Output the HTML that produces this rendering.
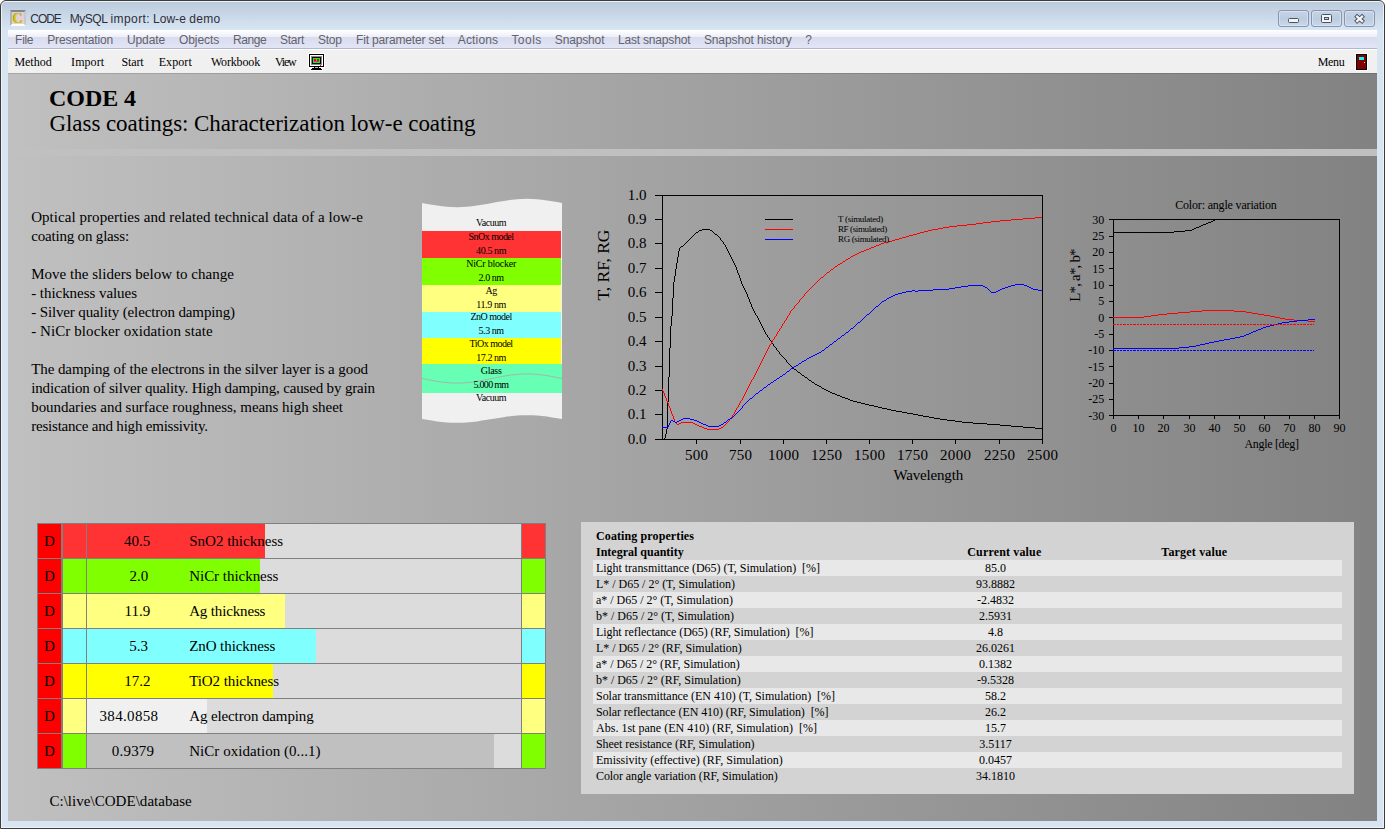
<!DOCTYPE html>
<html lang="en"><head><meta charset="utf-8"><title>CODE MySQL import: Low-e demo</title>
<style>
*{box-sizing:border-box;margin:0;padding:0}
html,body{width:1385px;height:829px;overflow:hidden;background:#fff}
body{font-family:"Liberation Serif",serif;color:#000;position:relative}
.t{position:absolute;white-space:pre}
.b{position:absolute}
#frame{position:absolute;left:0;top:0;width:1385px;height:829px;background:#d7e4f2;border:1px solid #3c3c3c;border-radius:6px 6px 0 0;overflow:hidden;box-shadow:inset 0 0 0 1px rgba(255,255,255,.55)}
#title{position:absolute;left:2px;top:2px;width:1381px;height:28px;border-radius:4px 4px 0 0;background:linear-gradient(#bbccdd 0,#d8e5f3 100%)}
#menubar{position:absolute;left:8px;top:30px;width:1369px;height:19px;background:linear-gradient(#ffffff 0,#fbfbfe 2px,#eceef7 7px,#d9dcef 7.2px,#e2e5f4 18px);border-bottom:1px solid #b3b8cf}
#tool{position:absolute;left:8px;top:49px;width:1369px;height:24px;background:#f0f0f0;border-top:1px solid #fff}
#content{position:absolute;left:8px;top:73px;width:1369px;height:748px;background:linear-gradient(90deg,#c0c0c0 0,#828282 100%);border-top:1px solid rgba(0,0,0,.13)}
</style></head>
<body>
<div id="frame"></div><div id="title"></div><div id="menubar"></div><div id="tool"></div><div id="content"></div>
<div class="b" style="left:8px;top:149px;width:1369px;height:7px;background:#c0c0c0"></div>
<div class="b" style="left:10px;top:10px;width:16px;height:16px;border-style:solid;border-width:2px;border-color:#858585 #c8c8c8 #fdfdfd #b2b2b2;background:linear-gradient(#d9cbe8,#ecd3c4)"></div><span class="t" style='left:12.90px;top:10.17px;font:bold 14px/18px "Liberation Serif",serif;color:#cfcf16;text-shadow:-0.6px 0 0 #8f8f10;'>C</span><span class="t" style='left:30.30px;top:11.64px;font:12px/15px "Liberation Sans",sans-serif;letter-spacing:-1.078px;color:#2e2e3a;'>CODE</span><span class="t" style='left:69.70px;top:11.64px;font:12px/15px "Liberation Sans",sans-serif;letter-spacing:-0.470px;color:#2e2e3a;'>MySQL</span><span class="t" style='left:110.40px;top:11.64px;font:12px/15px "Liberation Sans",sans-serif;letter-spacing:0.433px;color:#2e2e3a;'>import:</span><span class="t" style='left:152.90px;top:11.64px;font:12px/15px "Liberation Sans",sans-serif;letter-spacing:0.069px;color:#2e2e3a;'>Low-e</span><span class="t" style='left:189.30px;top:11.64px;font:12px/15px "Liberation Sans",sans-serif;letter-spacing:0.248px;color:#2e2e3a;'>demo</span><div class="b" style="left:1278px;top:10px;width:31px;height:17px;border:1px solid #8693b1;border-radius:3px;background:linear-gradient(#c5d4e5,#bccce0 50%,#c8d7e8);box-shadow:inset 0 0 0 1px rgba(255,255,255,.35)"></div><div class="b" style="left:1311px;top:10px;width:31px;height:17px;border:1px solid #8693b1;border-radius:3px;background:linear-gradient(#c5d4e5,#bccce0 50%,#c8d7e8);box-shadow:inset 0 0 0 1px rgba(255,255,255,.35)"></div><div class="b" style="left:1344px;top:10px;width:31px;height:17px;border:1px solid #8693b1;border-radius:3px;background:linear-gradient(#c5d4e5,#bccce0 50%,#c8d7e8);box-shadow:inset 0 0 0 1px rgba(255,255,255,.35)"></div><div class="b" style="left:1288px;top:18px;width:11px;height:5px;border:1px solid #4b5263;border-radius:1.5px;background:#f4f4f4"></div><div class="b" style="left:1321px;top:14px;width:11px;height:9px;border:1px solid #4b5263;border-radius:1.5px;background:#f4f4f4"></div><div class="b" style="left:1324px;top:17px;width:5px;height:3px;border:1px solid #4b5263;background:#c1d0e3"></div><svg class="b" style="left:1352px;top:12px" width="16" height="14" viewBox="1352 12 16 14"><g stroke-linecap="butt" fill="none"><path d="M1355.6 15.2l8 7.2M1363.6 15.2l-8 7.2" stroke="#4b5263" stroke-width="4.2"/><path d="M1356.3 15.9l6.6 5.9M1362.9 15.9l-6.6 5.9" stroke="#f4f4f4" stroke-width="2.3"/></g></svg><span class="t" style='left:15.10px;top:33.44px;font:12px/15px "Liberation Sans",sans-serif;letter-spacing:-0.298px;color:#63636b;'>File</span><span class="t" style='left:47.20px;top:33.44px;font:12px/15px "Liberation Sans",sans-serif;letter-spacing:-0.121px;color:#63636b;'>Presentation</span><span class="t" style='left:126.90px;top:33.44px;font:12px/15px "Liberation Sans",sans-serif;letter-spacing:-0.091px;color:#63636b;'>Update</span><span class="t" style='left:178.90px;top:33.44px;font:12px/15px "Liberation Sans",sans-serif;letter-spacing:-0.060px;color:#63636b;'>Objects</span><span class="t" style='left:232.90px;top:33.44px;font:12px/15px "Liberation Sans",sans-serif;letter-spacing:-0.417px;color:#63636b;'>Range</span><span class="t" style='left:280.10px;top:33.44px;font:12px/15px "Liberation Sans",sans-serif;letter-spacing:-0.299px;color:#63636b;'>Start</span><span class="t" style='left:318.00px;top:33.44px;font:12px/15px "Liberation Sans",sans-serif;letter-spacing:-0.254px;color:#63636b;'>Stop</span><span class="t" style='left:356.00px;top:33.44px;font:12px/15px "Liberation Sans",sans-serif;letter-spacing:-0.152px;color:#63636b;'>Fit parameter set</span><span class="t" style='left:457.80px;top:33.44px;font:12px/15px "Liberation Sans",sans-serif;letter-spacing:0.160px;color:#63636b;'>Actions</span><span class="t" style='left:511.40px;top:33.44px;font:12px/15px "Liberation Sans",sans-serif;letter-spacing:0.463px;color:#63636b;'>Tools</span><span class="t" style='left:554.80px;top:33.44px;font:12px/15px "Liberation Sans",sans-serif;letter-spacing:-0.149px;color:#63636b;'>Snapshot</span><span class="t" style='left:617.90px;top:33.44px;font:12px/15px "Liberation Sans",sans-serif;letter-spacing:-0.177px;color:#63636b;'>Last snapshot</span><span class="t" style='left:703.90px;top:33.44px;font:12px/15px "Liberation Sans",sans-serif;letter-spacing:-0.103px;color:#63636b;'>Snapshot history</span><span class="t" style='left:805.20px;top:33.44px;font:12px/15px "Liberation Sans",sans-serif;color:#63636b;'>?</span>
<span class="t" style='left:14.40px;top:54.75px;font:12px/15px "Liberation Serif",serif;letter-spacing:-0.008px;'>Method</span><span class="t" style='left:71.10px;top:54.75px;font:12px/15px "Liberation Serif",serif;letter-spacing:0.060px;'>Import</span><span class="t" style='left:121.60px;top:54.75px;font:12px/15px "Liberation Serif",serif;letter-spacing:-0.149px;'>Start</span><span class="t" style='left:158.70px;top:54.75px;font:12px/15px "Liberation Serif",serif;letter-spacing:0.078px;'>Export</span><span class="t" style='left:210.90px;top:54.75px;font:12px/15px "Liberation Serif",serif;letter-spacing:-0.157px;'>Workbook</span><span class="t" style='left:275.00px;top:54.75px;font:12px/15px "Liberation Serif",serif;letter-spacing:-1.195px;'>View</span><span class="t" style='left:1317.70px;top:54.75px;font:12px/15px "Liberation Serif",serif;letter-spacing:-0.343px;'>Menu</span><svg class="b" style="left:307px;top:52px" width="20" height="20" viewBox="307 52 20 20" shape-rendering="crispEdges"><rect x="308" y="53" width="17" height="15" fill="#fff"/><rect x="310" y="67" width="13" height="4" fill="#fff"/><rect x="309" y="54" width="15" height="13" fill="#000"/><rect x="310" y="55" width="13" height="11" fill="#fff"/><rect x="311" y="56" width="11" height="9" fill="#8a8a8a"/><rect x="312" y="57" width="9" height="7" fill="#100010"/><rect x="313" y="58" width="7" height="5" fill="#00ff00"/><rect x="314" y="59" width="2" height="2" fill="#ff0000"/><rect x="317" y="59" width="2" height="2" fill="#ff0000"/><rect x="314" y="61" width="5" height="1" fill="#ff00ff"/><rect x="320" y="65" width="1" height="1" fill="#ff0000"/><rect x="314" y="67" width="5" height="2" fill="#000"/><rect x="315" y="67" width="3" height="1" fill="#c0c0c0"/><rect x="312" y="68" width="9" height="1" fill="#000"/><rect x="311" y="69" width="11" height="1" fill="#000"/></svg><svg class="b" style="left:1355px;top:53px" width="13" height="18" viewBox="1355 53 13 18" shape-rendering="crispEdges"><rect x="1355" y="53" width="13" height="18" fill="#fff"/><rect x="1356" y="54" width="11" height="16" fill="#000"/><rect x="1357" y="55" width="9" height="14" fill="#800000"/><rect x="1359" y="57" width="5" height="3" fill="#00ffff"/><rect x="1364" y="62" width="1" height="1" fill="#ffff00"/></svg>
<span class="t" style='left:49.00px;top:83.00px;font:bold 24px/30px "Liberation Serif",serif;letter-spacing:-0.062px;'>CODE 4</span><span class="t" style='left:49.50px;top:109.04px;font:23px/29px "Liberation Serif",serif;letter-spacing:-0.070px;'>Glass coatings: Characterization low-e coating</span>
<span class="t" style='left:31.20px;top:207.84px;font:15px/19px "Liberation Serif",serif;letter-spacing:0.050px;'>Optical properties and related technical data of a low-e</span><span class="t" style='left:31.20px;top:226.84px;font:15px/19px "Liberation Serif",serif;letter-spacing:-0.184px;'>coating on glass:</span><span class="t" style='left:31.20px;top:264.84px;font:15px/19px "Liberation Serif",serif;letter-spacing:0.024px;'>Move the sliders below to change</span><span class="t" style='left:31.20px;top:283.84px;font:15px/19px "Liberation Serif",serif;letter-spacing:-0.048px;'>- thickness values</span><span class="t" style='left:31.20px;top:302.84px;font:15px/19px "Liberation Serif",serif;letter-spacing:-0.130px;'>- Silver quality (electron damping)</span><span class="t" style='left:31.20px;top:321.84px;font:15px/19px "Liberation Serif",serif;letter-spacing:0.081px;'>- NiCr blocker oxidation state</span><span class="t" style='left:31.20px;top:359.84px;font:15px/19px "Liberation Serif",serif;letter-spacing:-0.090px;'>The damping of the electrons in the silver layer is a good</span><span class="t" style='left:31.20px;top:378.84px;font:15px/19px "Liberation Serif",serif;letter-spacing:-0.159px;'>indication of silver quality. High damping, caused by grain</span><span class="t" style='left:31.20px;top:397.84px;font:15px/19px "Liberation Serif",serif;letter-spacing:-0.038px;'>boundaries and surface roughness, means high sheet</span><span class="t" style='left:31.20px;top:416.84px;font:15px/19px "Liberation Serif",serif;letter-spacing:-0.209px;'>resistance and high emissivity.</span>
<svg class="b" style="left:410px;top:190px" width="170" height="245" viewBox="410 190 170 245"><polygon points="422.0,203.0 427.0,203.9 432.0,204.8 437.0,205.6 442.0,206.3 447.0,206.8 452.0,207.1 457.0,207.2 462.0,207.1 467.0,206.8 472.0,206.3 477.0,205.6 482.0,204.8 487.0,203.9 492.0,203.0 497.0,202.1 502.0,201.2 507.0,200.4 512.0,199.7 517.0,199.2 522.0,198.9 527.0,198.8 532.0,198.9 537.0,199.2 542.0,199.7 547.0,200.4 552.0,201.2 557.0,202.1 562.0,203.0 562.0,419.0 557.0,418.2 552.0,417.4 547.0,416.6 542.0,416.0 537.0,415.6 532.0,415.3 527.0,415.2 522.0,415.3 517.0,415.6 512.0,416.0 507.0,416.6 502.0,417.4 497.0,418.2 492.0,419.0 487.0,419.8 482.0,420.6 477.0,421.4 472.0,422.0 467.0,422.4 462.0,422.7 457.0,422.8 452.0,422.7 447.0,422.4 442.0,422.0 437.0,421.4 432.0,420.6 427.0,419.8 422.0,419.0" fill="#f0f0f0"/><rect x="422" y="231" width="139" height="27" fill="#ff3333" shape-rendering="crispEdges"/><rect x="422" y="258" width="139" height="27" fill="#80ff00" shape-rendering="crispEdges"/><rect x="422" y="285" width="139" height="27" fill="#ffff80" shape-rendering="crispEdges"/><rect x="422" y="312" width="139" height="26" fill="#80ffff" shape-rendering="crispEdges"/><rect x="422" y="338" width="139" height="26" fill="#ffff00" shape-rendering="crispEdges"/><rect x="422" y="364" width="140" height="29" fill="#66ffb3" shape-rendering="crispEdges"/><polyline points="422.0,378.5 427.0,379.5 432.0,380.5 437.0,381.4 442.0,382.1 447.0,382.6 452.0,383.0 457.0,383.1 462.0,383.0 467.0,382.6 472.0,382.1 477.0,381.4 482.0,380.5 487.0,379.5 492.0,378.5 497.0,377.5 502.0,376.5 507.0,375.6 512.0,374.9 517.0,374.4 522.0,374.0 527.0,373.9 532.0,374.0 537.0,374.4 542.0,374.9 547.0,375.6 552.0,376.5 557.0,377.5 562.0,378.5" fill="none" stroke="#a3b8aa" stroke-width="1"/></svg><span class="t" style='left:476.08px;top:215.82px;font:10px/13px "Liberation Serif",serif;letter-spacing:-0.469px;'>Vacuum</span><span class="t" style='left:468.57px;top:229.82px;font:10px/13px "Liberation Serif",serif;letter-spacing:-0.535px;'>SnOx model</span><span class="t" style='left:476.10px;top:244.22px;font:10px/13px "Liberation Serif",serif;letter-spacing:-0.397px;'>40.5 nm</span><span class="t" style='left:466.34px;top:256.82px;font:10px/13px "Liberation Serif",serif;letter-spacing:-0.235px;'>NiCr blocker</span><span class="t" style='left:478.54px;top:270.93px;font:10px/13px "Liberation Serif",serif;letter-spacing:-0.451px;'>2.0 nm</span><span class="t" style='left:485.43px;top:284.02px;font:10px/13px "Liberation Serif",serif;letter-spacing:-0.490px;'>Ag</span><span class="t" style='left:476.25px;top:297.82px;font:10px/13px "Liberation Serif",serif;letter-spacing:-0.388px;'>11.9 nm</span><span class="t" style='left:470.38px;top:309.82px;font:10px/13px "Liberation Serif",serif;letter-spacing:-0.497px;'>ZnO model</span><span class="t" style='left:478.54px;top:323.82px;font:10px/13px "Liberation Serif",serif;letter-spacing:-0.451px;'>5.3 nm</span><span class="t" style='left:469.47px;top:336.72px;font:10px/13px "Liberation Serif",serif;letter-spacing:-0.512px;'>TiOx model</span><span class="t" style='left:476.24px;top:350.82px;font:10px/13px "Liberation Serif",serif;letter-spacing:-0.443px;'>17.2 nm</span><span class="t" style='left:480.69px;top:364.02px;font:10px/13px "Liberation Serif",serif;letter-spacing:-0.252px;'>Glass</span><span class="t" style='left:473.47px;top:377.72px;font:10px/13px "Liberation Serif",serif;letter-spacing:-0.702px;'>5.000 mm</span><span class="t" style='left:476.08px;top:391.02px;font:10px/13px "Liberation Serif",serif;letter-spacing:-0.469px;'>Vacuum</span>
<svg class="b" style="left:590px;top:180px" width="480" height="310" viewBox="590 180 480 310" shape-rendering="crispEdges"><path d="M655 195.5H1042.5V439.5H655M662.5 195.5V439.5" fill="none" stroke="#000" stroke-width="1"/><path d="M655 219.5H662M655 243.5H662M655 268.5H662M655 292.5H662M655 317.5H662M655 341.5H662M655 366.5H662M655 390.5H662M655 414.5H662" fill="none" stroke="#000" stroke-width="1"/><path d="M696.5 439V444M740.5 439V444M783.5 439V444M826.5 439V444M869.5 439V444M912.5 439V444M955.5 439V444M999.5 439V444M1042.5 439V444" fill="none" stroke="#000" stroke-width="1"/><path d="M702 229h8v1h-8zM699 230h3v1h-3zM710 230h2v1h-2zM698 231h1v1h-1zM712 231h1v1h-1zM696 232h2v1h-2zM713 232h1v1h-1zM695 233h1v1h-1zM714 233h1v1h-1zM694 234h1v1h-1zM715 234h2v1h-2zM693 235h1v1h-1zM717 235h1v1h-1zM692 236h1v1h-1zM718 236h1v1h-1zM691 237h1v1h-1zM719 237h1v1h-1zM690 238h1v1h-1zM720 238h1v2h-1zM689 239h1v1h-1zM688 240h1v1h-1zM721 240h1v1h-1zM687 241h1v1h-1zM722 241h1v1h-1zM686 242h1v1h-1zM723 242h1v2h-1zM685 243h1v1h-1zM684 244h1v1h-1zM724 244h1v1h-1zM683 245h1v1h-1zM725 245h1v2h-1zM681 246h2v1h-2zM680 247h1v1h-1zM726 247h1v2h-1zM679 248h1v3h-1zM727 249h1v2h-1zM678 251h1v6h-1zM728 251h1v2h-1zM729 253h1v2h-1zM730 255h1v2h-1zM677 257h1v6h-1zM731 257h1v2h-1zM732 259h1v2h-1zM733 261h1v2h-1zM676 263h1v6h-1zM734 263h1v2h-1zM735 265h1v2h-1zM736 267h1v3h-1zM675 269h1v7h-1zM737 270h1v3h-1zM738 273h1v2h-1zM739 275h1v3h-1zM674 276h1v6h-1zM740 278h1v3h-1zM741 281h1v3h-1zM673 282h1v16h-1zM742 284h1v2h-1zM743 286h1v2h-1zM744 288h1v2h-1zM745 290h1v2h-1zM746 292h1v2h-1zM747 294h1v3h-1zM748 297h1v2h-1zM672 298h1v18h-1zM749 299h1v3h-1zM750 302h1v2h-1zM751 304h1v3h-1zM752 307h1v2h-1zM753 309h1v2h-1zM754 311h1v2h-1zM755 313h1v2h-1zM756 315h1v1h-1zM671 316h1v10h-1zM757 316h1v2h-1zM758 318h1v2h-1zM759 320h1v2h-1zM760 322h1v2h-1zM761 324h1v2h-1zM670 326h1v22h-1zM762 326h1v2h-1zM763 328h1v2h-1zM764 330h1v2h-1zM765 332h1v2h-1zM766 334h1v1h-1zM767 335h1v2h-1zM768 337h1v1h-1zM769 338h1v2h-1zM770 340h1v1h-1zM771 341h1v2h-1zM772 343h1v1h-1zM773 344h1v2h-1zM774 346h1v1h-1zM775 347h1v1h-1zM669 348h1v29h-1zM776 348h1v2h-1zM777 350h1v1h-1zM778 351h1v1h-1zM779 352h1v2h-1zM780 354h1v1h-1zM781 355h1v1h-1zM782 356h1v1h-1zM783 357h1v1h-1zM784 358h1v1h-1zM785 359h1v1h-1zM786 360h1v2h-1zM787 362h1v1h-1zM788 363h1v1h-1zM789 364h1v1h-1zM790 365h1v1h-1zM791 366h1v1h-1zM792 367h1v1h-1zM793 368h1v1h-1zM794 369h2v1h-2zM796 370h1v1h-1zM797 371h1v1h-1zM798 372h2v1h-2zM800 373h1v1h-1zM801 374h1v1h-1zM802 375h2v1h-2zM804 376h1v1h-1zM668 377h1v25h-1zM805 377h2v1h-2zM807 378h1v1h-1zM808 379h1v1h-1zM809 380h2v1h-2zM811 381h1v1h-1zM812 382h2v1h-2zM814 383h1v1h-1zM815 384h2v1h-2zM817 385h2v1h-2zM819 386h2v1h-2zM821 387h1v1h-1zM822 388h2v1h-2zM824 389h2v1h-2zM826 390h2v1h-2zM828 391h2v1h-2zM830 392h2v1h-2zM832 393h3v1h-3zM835 394h2v1h-2zM837 395h3v1h-3zM840 396h2v1h-2zM842 397h3v1h-3zM845 398h3v1h-3zM848 399h2v1h-2zM850 400h3v1h-3zM853 401h4v1h-4zM667 402h1v27h-1zM857 402h4v1h-4zM861 403h4v1h-4zM865 404h4v1h-4zM869 405h5v1h-5zM874 406h4v1h-4zM878 407h4v1h-4zM882 408h5v1h-5zM887 409h4v1h-4zM891 410h5v1h-5zM896 411h6v1h-6zM902 412h5v1h-5zM907 413h6v1h-6zM913 414h5v1h-5zM918 415h5v1h-5zM923 416h6v1h-6zM929 417h5v1h-5zM934 418h6v1h-6zM940 419h7v1h-7zM947 420h8v1h-8zM955 421h7v1h-7zM962 422h11v1h-11zM973 423h14v1h-14zM987 424h13v1h-13zM1000 425h11v1h-11zM1011 426h12v1h-12zM1023 427h12v1h-12zM1035 428h7v1h-7zM666 429h1v5h-1zM665 434h1v4h-1zM664 438h1v1h-1z" fill="#000"/><path d="M1035 217h7v1h-7zM1023 218h12v1h-12zM1011 219h12v1h-12zM1000 220h11v1h-11zM991 221h9v1h-9zM983 222h8v1h-8zM976 223h7v1h-7zM967 224h9v1h-9zM957 225h10v1h-10zM949 226h8v1h-8zM943 227h6v1h-6zM938 228h5v1h-5zM932 229h6v1h-6zM928 230h4v1h-4zM924 231h4v1h-4zM920 232h4v1h-4zM917 233h3v1h-3zM913 234h4v1h-4zM909 235h4v1h-4zM906 236h3v1h-3zM902 237h4v1h-4zM899 238h3v1h-3zM895 239h4v1h-4zM892 240h3v1h-3zM888 241h4v1h-4zM884 242h4v1h-4zM881 243h3v1h-3zM879 244h2v1h-2zM876 245h3v1h-3zM874 246h2v1h-2zM871 247h3v1h-3zM869 248h2v1h-2zM866 249h3v1h-3zM864 250h2v1h-2zM861 251h3v1h-3zM859 252h2v1h-2zM857 253h2v1h-2zM855 254h2v1h-2zM853 255h2v1h-2zM851 256h2v1h-2zM850 257h1v1h-1zM848 258h2v1h-2zM846 259h2v1h-2zM845 260h1v1h-1zM843 261h2v1h-2zM842 262h1v1h-1zM840 263h2v1h-2zM838 264h2v1h-2zM837 265h1v1h-1zM835 266h2v1h-2zM834 267h1v1h-1zM833 268h1v1h-1zM831 269h2v1h-2zM830 270h1v1h-1zM829 271h1v1h-1zM827 272h2v1h-2zM826 273h1v1h-1zM825 274h1v1h-1zM824 275h1v1h-1zM823 276h1v1h-1zM821 277h2v1h-2zM820 278h1v1h-1zM819 279h1v1h-1zM818 280h1v1h-1zM817 281h1v1h-1zM816 282h1v1h-1zM815 283h1v1h-1zM814 284h1v1h-1zM813 285h1v1h-1zM812 286h1v1h-1zM811 287h1v1h-1zM810 288h1v1h-1zM809 289h1v1h-1zM808 290h1v1h-1zM807 291h1v1h-1zM806 292h1v1h-1zM805 293h1v1h-1zM804 294h1v2h-1zM803 296h1v1h-1zM802 297h1v1h-1zM801 298h1v1h-1zM800 299h1v1h-1zM799 300h1v2h-1zM798 302h1v1h-1zM797 303h1v1h-1zM796 304h1v1h-1zM795 305h1v1h-1zM794 306h1v2h-1zM793 308h1v1h-1zM792 309h1v1h-1zM791 310h1v1h-1zM790 311h1v2h-1zM789 313h1v2h-1zM788 315h1v1h-1zM787 316h1v2h-1zM786 318h1v2h-1zM785 320h1v1h-1zM784 321h1v2h-1zM783 323h1v1h-1zM782 324h1v2h-1zM781 326h1v2h-1zM780 328h1v1h-1zM779 329h1v2h-1zM778 331h1v1h-1zM777 332h1v2h-1zM776 334h1v2h-1zM775 336h1v1h-1zM774 337h1v2h-1zM773 339h1v1h-1zM772 340h1v2h-1zM771 342h1v2h-1zM770 344h1v1h-1zM769 345h1v2h-1zM768 347h1v2h-1zM767 349h1v2h-1zM766 351h1v2h-1zM765 353h1v2h-1zM764 355h1v2h-1zM763 357h1v2h-1zM762 359h1v2h-1zM761 361h1v2h-1zM760 363h1v2h-1zM759 365h1v2h-1zM758 367h1v2h-1zM757 369h1v2h-1zM756 371h1v2h-1zM755 373h1v2h-1zM754 375h1v2h-1zM753 377h1v2h-1zM752 379h1v1h-1zM751 380h1v2h-1zM750 382h1v2h-1zM749 384h1v2h-1zM748 386h1v2h-1zM747 388h1v2h-1zM662 389h1v2h-1zM746 390h1v2h-1zM663 391h1v2h-1zM745 392h1v2h-1zM664 393h1v3h-1zM744 394h1v2h-1zM665 396h1v2h-1zM743 396h1v2h-1zM666 398h1v3h-1zM742 398h1v2h-1zM741 400h1v1h-1zM667 401h1v2h-1zM740 401h1v2h-1zM668 403h1v3h-1zM739 403h1v2h-1zM738 405h1v2h-1zM669 406h1v2h-1zM737 407h1v1h-1zM670 408h1v3h-1zM736 408h1v2h-1zM735 410h1v2h-1zM671 411h1v3h-1zM734 412h1v2h-1zM672 414h1v2h-1zM733 414h1v1h-1zM732 415h1v2h-1zM673 416h1v3h-1zM731 417h1v1h-1zM730 418h1v1h-1zM674 419h1v3h-1zM729 419h1v2h-1zM728 421h1v1h-1zM675 422h1v1h-1zM681 422h12v1h-12zM727 422h1v1h-1zM676 423h1v1h-1zM679 423h2v1h-2zM693 423h2v1h-2zM726 423h1v1h-1zM677 424h2v1h-2zM695 424h2v1h-2zM725 424h1v1h-1zM697 425h2v1h-2zM724 425h1v1h-1zM699 426h3v1h-3zM723 426h1v1h-1zM702 427h2v1h-2zM721 427h2v1h-2zM704 428h3v1h-3zM719 428h2v1h-2zM707 429h12v1h-12z" fill="#ff0000"/><path d="M1015 284h9v1h-9zM968 285h15v1h-15zM1011 285h4v1h-4zM1024 285h3v1h-3zM961 286h7v1h-7zM983 286h2v1h-2zM1008 286h3v1h-3zM1027 286h2v1h-2zM955 287h6v1h-6zM985 287h2v1h-2zM1005 287h3v1h-3zM1029 287h2v1h-2zM949 288h6v1h-6zM987 288h1v1h-1zM1002 288h3v1h-3zM1031 288h2v1h-2zM933 289h16v1h-16zM988 289h1v1h-1zM1000 289h2v1h-2zM1033 289h5v1h-5zM912 290h3v1h-3zM918 290h15v1h-15zM989 290h1v1h-1zM998 290h2v1h-2zM1038 290h4v1h-4zM906 291h6v1h-6zM915 291h3v1h-3zM990 291h1v1h-1zM996 291h2v1h-2zM902 292h4v1h-4zM991 292h5v1h-5zM898 293h4v1h-4zM895 294h3v1h-3zM893 295h2v1h-2zM891 296h2v1h-2zM889 297h2v1h-2zM887 298h2v1h-2zM886 299h1v1h-1zM884 300h2v1h-2zM882 301h2v1h-2zM881 302h1v1h-1zM880 303h1v1h-1zM879 304h1v1h-1zM878 305h1v1h-1zM876 306h2v1h-2zM875 307h1v1h-1zM874 308h1v1h-1zM873 309h1v1h-1zM872 310h1v1h-1zM871 311h1v1h-1zM870 312h1v1h-1zM869 313h1v1h-1zM867 314h2v1h-2zM866 315h1v1h-1zM865 316h1v1h-1zM864 317h1v1h-1zM863 318h1v1h-1zM862 319h1v1h-1zM861 320h1v1h-1zM860 321h1v1h-1zM858 322h2v1h-2zM857 323h1v1h-1zM856 324h1v1h-1zM855 325h1v1h-1zM854 326h1v1h-1zM853 327h1v1h-1zM851 328h2v1h-2zM850 329h1v1h-1zM849 330h1v1h-1zM848 331h1v1h-1zM846 332h2v1h-2zM845 333h1v1h-1zM844 334h1v1h-1zM842 335h2v1h-2zM841 336h1v1h-1zM840 337h1v1h-1zM838 338h2v1h-2zM837 339h1v1h-1zM836 340h1v1h-1zM834 341h2v1h-2zM833 342h1v1h-1zM832 343h1v1h-1zM830 344h2v1h-2zM829 345h1v1h-1zM828 346h1v1h-1zM826 347h2v1h-2zM825 348h1v1h-1zM824 349h1v1h-1zM822 350h2v1h-2zM821 351h1v1h-1zM819 352h2v1h-2zM817 353h2v1h-2zM815 354h2v1h-2zM813 355h2v1h-2zM811 356h2v1h-2zM809 357h2v1h-2zM807 358h2v1h-2zM806 359h1v1h-1zM804 360h2v1h-2zM802 361h2v1h-2zM801 362h1v1h-1zM799 363h2v1h-2zM798 364h1v1h-1zM796 365h2v1h-2zM794 366h2v1h-2zM793 367h1v1h-1zM791 368h2v1h-2zM790 369h1v1h-1zM789 370h1v1h-1zM787 371h2v1h-2zM786 372h1v1h-1zM785 373h1v1h-1zM783 374h2v1h-2zM782 375h1v1h-1zM780 376h2v1h-2zM779 377h1v1h-1zM777 378h2v1h-2zM776 379h1v1h-1zM774 380h2v1h-2zM773 381h1v1h-1zM771 382h2v1h-2zM770 383h1v1h-1zM768 384h2v1h-2zM767 385h1v1h-1zM766 386h1v1h-1zM764 387h2v1h-2zM763 388h1v1h-1zM762 389h1v1h-1zM760 390h2v1h-2zM759 391h1v1h-1zM758 392h1v1h-1zM756 393h2v1h-2zM755 394h1v1h-1zM754 395h1v1h-1zM753 396h1v1h-1zM752 397h1v1h-1zM750 398h2v1h-2zM749 399h1v1h-1zM748 400h1v1h-1zM747 401h1v1h-1zM746 402h1v1h-1zM745 403h1v1h-1zM744 404h1v1h-1zM743 405h1v1h-1zM742 406h1v2h-1zM741 408h1v1h-1zM740 409h1v1h-1zM739 410h1v1h-1zM738 411h1v1h-1zM737 412h1v1h-1zM736 413h1v1h-1zM735 414h1v1h-1zM734 415h1v1h-1zM733 416h1v1h-1zM732 417h1v1h-1zM683 418h7v1h-7zM730 418h2v1h-2zM681 419h2v1h-2zM690 419h4v1h-4zM728 419h2v1h-2zM671 420h2v1h-2zM679 420h2v1h-2zM694 420h3v1h-3zM727 420h1v1h-1zM670 421h1v2h-1zM673 421h2v1h-2zM677 421h2v1h-2zM697 421h2v1h-2zM726 421h1v1h-1zM675 422h2v1h-2zM699 422h2v1h-2zM724 422h2v1h-2zM669 423h1v2h-1zM701 423h2v1h-2zM723 423h1v1h-1zM703 424h3v1h-3zM721 424h2v1h-2zM668 425h1v2h-1zM706 425h2v1h-2zM719 425h2v1h-2zM708 426h11v1h-11zM662 427h6v1h-6z" fill="#0000ff"/><path d="M765 219.5H793" stroke="#000" stroke-width="1"/><path d="M765 229.5H793" stroke="#ff0000" stroke-width="1"/><path d="M765 239.5H793" stroke="#0000ff" stroke-width="1"/></svg>
<span class="t" style='left:627.85px;top:186.04px;font:15px/19px "Liberation Serif",serif;'>1.0</span><span class="t" style='left:627.85px;top:210.04px;font:15px/19px "Liberation Serif",serif;'>0.9</span><span class="t" style='left:627.85px;top:234.04px;font:15px/19px "Liberation Serif",serif;'>0.8</span><span class="t" style='left:627.85px;top:259.04px;font:15px/19px "Liberation Serif",serif;'>0.7</span><span class="t" style='left:627.85px;top:283.04px;font:15px/19px "Liberation Serif",serif;'>0.6</span><span class="t" style='left:627.85px;top:308.04px;font:15px/19px "Liberation Serif",serif;'>0.5</span><span class="t" style='left:627.85px;top:332.04px;font:15px/19px "Liberation Serif",serif;'>0.4</span><span class="t" style='left:627.85px;top:357.04px;font:15px/19px "Liberation Serif",serif;'>0.3</span><span class="t" style='left:627.85px;top:381.04px;font:15px/19px "Liberation Serif",serif;'>0.2</span><span class="t" style='left:627.85px;top:405.04px;font:15px/19px "Liberation Serif",serif;'>0.1</span><span class="t" style='left:627.85px;top:430.04px;font:15px/19px "Liberation Serif",serif;'>0.0</span><span class="t" style='left:684.97px;top:446.14px;font:15px/19px "Liberation Serif",serif;letter-spacing:0.280px;'>500</span><span class="t" style='left:728.97px;top:446.14px;font:15px/19px "Liberation Serif",serif;letter-spacing:0.280px;'>750</span><span class="t" style='left:768.07px;top:446.14px;font:15px/19px "Liberation Serif",serif;letter-spacing:0.286px;'>1000</span><span class="t" style='left:811.07px;top:446.14px;font:15px/19px "Liberation Serif",serif;letter-spacing:0.286px;'>1250</span><span class="t" style='left:854.07px;top:446.14px;font:15px/19px "Liberation Serif",serif;letter-spacing:0.286px;'>1500</span><span class="t" style='left:897.07px;top:446.14px;font:15px/19px "Liberation Serif",serif;letter-spacing:0.286px;'>1750</span><span class="t" style='left:940.07px;top:446.14px;font:15px/19px "Liberation Serif",serif;letter-spacing:0.286px;'>2000</span><span class="t" style='left:984.07px;top:446.14px;font:15px/19px "Liberation Serif",serif;letter-spacing:0.286px;'>2250</span><span class="t" style='left:1027.07px;top:446.14px;font:15px/19px "Liberation Serif",serif;letter-spacing:0.286px;'>2500</span><span class="t" style='left:893.50px;top:466.44px;font:15px/19px "Liberation Serif",serif;letter-spacing:-0.175px;'>Wavelength</span><span class="t" style='left:838.00px;top:213.46px;font:9px/12px "Liberation Serif",serif;letter-spacing:-0.286px;'>T (simulated)</span><span class="t" style='left:838.00px;top:223.36px;font:9px/12px "Liberation Serif",serif;letter-spacing:-0.389px;'>RF (simulated)</span><span class="t" style='left:838.00px;top:233.36px;font:9px/12px "Liberation Serif",serif;letter-spacing:-0.352px;'>RG (simulated)</span><span class="t" style='left:568.09px;top:253.90px;font:17.5px/22px "Liberation Serif",serif;transform:rotate(-90deg);letter-spacing:-0.026px;'>T, RF, RG</span><svg class="b" style="left:1060px;top:190px" width="310" height="270" viewBox="1060 190 310 270" shape-rendering="crispEdges"><path d="M1109 219.5H1339.5V415.5H1109M1113.5 219.5V419" fill="none" stroke="#000" stroke-width="1"/><path d="M1109 236.5H1113M1109 252.5H1113M1109 268.5H1113M1109 285.5H1113M1109 301.5H1113M1109 317.5H1113M1109 334.5H1113M1109 350.5H1113M1109 366.5H1113M1109 383.5H1113M1109 399.5H1113" fill="none" stroke="#000"/><path d="M1138.5 415V419M1163.5 415V419M1189.5 415V419M1214.5 415V419M1239.5 415V419M1264.5 415V419M1289.5 415V419M1314.5 415V419M1339.5 415V419" fill="none" stroke="#000"/><path d="M1215 219h2v1h-2zM1213 220h2v1h-2zM1211 221h2v1h-2zM1208 222h3v1h-3zM1206 223h2v1h-2zM1203 224h3v1h-3zM1201 225h2v1h-2zM1199 226h2v1h-2zM1196 227h3v1h-3zM1194 228h2v1h-2zM1192 229h2v1h-2zM1185 230h7v1h-7zM1174 231h11v1h-11zM1113 232h61v1h-61z" fill="#000"/><path d="M1202 310h32v1h-32zM1190 311h12v1h-12zM1234 311h12v1h-12zM1178 312h12v1h-12zM1246 312h6v1h-6zM1167 313h11v1h-11zM1252 313h6v1h-6zM1158 314h9v1h-9zM1258 314h6v1h-6zM1151 315h7v1h-7zM1264 315h6v1h-6zM1144 316h7v1h-7zM1270 316h5v1h-5zM1113 317h31v1h-31zM1275 317h5v1h-5zM1280 318h5v1h-5zM1285 319h9v1h-9zM1294 320h14v1h-14zM1308 321h7v1h-7z" fill="#ff0000"/><path d="M1308 319h7v1h-7zM1297 320h11v1h-11zM1289 321h8v1h-8zM1282 322h7v1h-7zM1278 323h4v1h-4zM1274 324h4v1h-4zM1270 325h4v1h-4zM1266 326h4v1h-4zM1263 327h3v1h-3zM1261 328h2v1h-2zM1258 329h3v1h-3zM1256 330h2v1h-2zM1253 331h3v1h-3zM1251 332h2v1h-2zM1249 333h2v1h-2zM1246 334h3v1h-3zM1244 335h2v1h-2zM1240 336h4v1h-4zM1235 337h5v1h-5zM1230 338h5v1h-5zM1224 339h6v1h-6zM1219 340h5v1h-5zM1214 341h5v1h-5zM1209 342h5v1h-5zM1205 343h4v1h-4zM1200 344h5v1h-5zM1196 345h4v1h-4zM1189 346h7v1h-7zM1179 347h10v1h-10zM1113 348h66v1h-66z" fill="#0000ff"/><path d="M1113 324.5H1314" stroke="#ff0000" stroke-dasharray="3 1 2 1 2 1"/><path d="M1113 350.5H1314" stroke="#0000ff" stroke-dasharray="3 1 2 1 2 1"/></svg>
<span class="t" style='left:1092.20px;top:212.71px;font:12px/15px "Liberation Serif",serif;'>30</span><span class="t" style='left:1092.20px;top:229.05px;font:12px/15px "Liberation Serif",serif;'>25</span><span class="t" style='left:1092.20px;top:245.39px;font:12px/15px "Liberation Serif",serif;'>20</span><span class="t" style='left:1092.20px;top:261.73px;font:12px/15px "Liberation Serif",serif;'>15</span><span class="t" style='left:1092.20px;top:278.07px;font:12px/15px "Liberation Serif",serif;'>10</span><span class="t" style='left:1098.20px;top:294.41px;font:12px/15px "Liberation Serif",serif;'>5</span><span class="t" style='left:1098.20px;top:310.75px;font:12px/15px "Liberation Serif",serif;'>0</span><span class="t" style='left:1094.20px;top:327.09px;font:12px/15px "Liberation Serif",serif;'>-5</span><span class="t" style='left:1088.20px;top:343.43px;font:12px/15px "Liberation Serif",serif;'>-10</span><span class="t" style='left:1088.20px;top:359.77px;font:12px/15px "Liberation Serif",serif;'>-15</span><span class="t" style='left:1088.20px;top:376.11px;font:12px/15px "Liberation Serif",serif;'>-20</span><span class="t" style='left:1088.20px;top:392.45px;font:12px/15px "Liberation Serif",serif;'>-25</span><span class="t" style='left:1088.20px;top:408.79px;font:12px/15px "Liberation Serif",serif;'>-30</span><span class="t" style='left:1110.50px;top:421.05px;font:12px/15px "Liberation Serif",serif;'>0</span><span class="t" style='left:1132.50px;top:421.05px;font:12px/15px "Liberation Serif",serif;'>10</span><span class="t" style='left:1157.50px;top:421.05px;font:12px/15px "Liberation Serif",serif;'>20</span><span class="t" style='left:1183.50px;top:421.05px;font:12px/15px "Liberation Serif",serif;'>30</span><span class="t" style='left:1208.50px;top:421.05px;font:12px/15px "Liberation Serif",serif;'>40</span><span class="t" style='left:1233.50px;top:421.05px;font:12px/15px "Liberation Serif",serif;'>50</span><span class="t" style='left:1258.50px;top:421.05px;font:12px/15px "Liberation Serif",serif;'>60</span><span class="t" style='left:1283.50px;top:421.05px;font:12px/15px "Liberation Serif",serif;'>70</span><span class="t" style='left:1308.50px;top:421.05px;font:12px/15px "Liberation Serif",serif;'>80</span><span class="t" style='left:1333.50px;top:421.05px;font:12px/15px "Liberation Serif",serif;'>90</span><span class="t" style='left:1175.20px;top:197.95px;font:12px/15px "Liberation Serif",serif;letter-spacing:-0.173px;'>Color: angle variation</span><span class="t" style='left:1244.50px;top:437.45px;font:12px/15px "Liberation Serif",serif;letter-spacing:-0.320px;'>Angle [deg]</span><span class="t" style='left:1049.23px;top:266.20px;font:15px/19px "Liberation Serif",serif;transform:rotate(-90deg);letter-spacing:-0.824px;'>L*, a*, b*</span><div class="b" style="left:37px;top:523px;width:509px;height:246px;background:#808080"></div><div class="b" style="left:38px;top:524px;width:23px;height:34px;background:#ff0000"></div><div class="b" style="left:63px;top:524px;width:23px;height:34px;background:#ff3333"></div><div class="b" style="left:87px;top:524px;width:434px;height:34px;background:#dcdcdc"></div><div class="b" style="left:87px;top:524px;width:178px;height:34px;background:#ff3333"></div><div class="b" style="left:522px;top:524px;width:23px;height:34px;background:#ff3333"></div><span class="t" style='left:43.98px;top:531.94px;font:15px/19px "Liberation Serif",serif;'>D</span><span class="t" style='left:123.88px;top:531.94px;font:15px/19px "Liberation Serif",serif;'>40.5</span><span class="t" style='left:189.20px;top:531.94px;font:15px/19px "Liberation Serif",serif;letter-spacing:0.011px;'>SnO2 thickness</span>
<div class="b" style="left:38px;top:559px;width:23px;height:34px;background:#ff0000"></div><div class="b" style="left:63px;top:559px;width:23px;height:34px;background:#80ff00"></div><div class="b" style="left:87px;top:559px;width:434px;height:34px;background:#dcdcdc"></div><div class="b" style="left:87px;top:559px;width:173px;height:34px;background:#80ff00"></div><div class="b" style="left:522px;top:559px;width:23px;height:34px;background:#80ff00"></div><span class="t" style='left:43.98px;top:566.94px;font:15px/19px "Liberation Serif",serif;'>D</span><span class="t" style='left:129.62px;top:566.94px;font:15px/19px "Liberation Serif",serif;'>2.0</span><span class="t" style='left:189.20px;top:566.94px;font:15px/19px "Liberation Serif",serif;letter-spacing:-0.028px;'>NiCr thickness</span>
<div class="b" style="left:38px;top:594px;width:23px;height:34px;background:#ff0000"></div><div class="b" style="left:63px;top:594px;width:23px;height:34px;background:#ffff80"></div><div class="b" style="left:87px;top:594px;width:434px;height:34px;background:#dcdcdc"></div><div class="b" style="left:87px;top:594px;width:198px;height:34px;background:#ffff80"></div><div class="b" style="left:522px;top:594px;width:23px;height:34px;background:#ffff80"></div><span class="t" style='left:43.98px;top:601.94px;font:15px/19px "Liberation Serif",serif;'>D</span><span class="t" style='left:124.55px;top:601.94px;font:15px/19px "Liberation Serif",serif;'>11.9</span><span class="t" style='left:189.20px;top:601.94px;font:15px/19px "Liberation Serif",serif;letter-spacing:-0.150px;'>Ag thickness</span>
<div class="b" style="left:38px;top:629px;width:23px;height:34px;background:#ff0000"></div><div class="b" style="left:63px;top:629px;width:23px;height:34px;background:#80ffff"></div><div class="b" style="left:87px;top:629px;width:434px;height:34px;background:#dcdcdc"></div><div class="b" style="left:87px;top:629px;width:229px;height:34px;background:#80ffff"></div><div class="b" style="left:522px;top:629px;width:23px;height:34px;background:#80ffff"></div><span class="t" style='left:43.98px;top:636.94px;font:15px/19px "Liberation Serif",serif;'>D</span><span class="t" style='left:129.32px;top:636.94px;font:15px/19px "Liberation Serif",serif;'>5.3</span><span class="t" style='left:189.20px;top:636.94px;font:15px/19px "Liberation Serif",serif;letter-spacing:-0.078px;'>ZnO thickness</span>
<div class="b" style="left:38px;top:664px;width:23px;height:34px;background:#ff0000"></div><div class="b" style="left:63px;top:664px;width:23px;height:34px;background:#ffff00"></div><div class="b" style="left:87px;top:664px;width:434px;height:34px;background:#dcdcdc"></div><div class="b" style="left:87px;top:664px;width:186px;height:34px;background:#ffff00"></div><div class="b" style="left:522px;top:664px;width:23px;height:34px;background:#ffff00"></div><span class="t" style='left:43.98px;top:671.94px;font:15px/19px "Liberation Serif",serif;'>D</span><span class="t" style='left:124.28px;top:671.94px;font:15px/19px "Liberation Serif",serif;'>17.2</span><span class="t" style='left:189.20px;top:671.94px;font:15px/19px "Liberation Serif",serif;letter-spacing:-0.068px;'>TiO2 thickness</span>
<div class="b" style="left:38px;top:699px;width:23px;height:34px;background:#ff0000"></div><div class="b" style="left:63px;top:699px;width:23px;height:34px;background:#ffff80"></div><div class="b" style="left:87px;top:699px;width:434px;height:34px;background:#dcdcdc"></div><div class="b" style="left:87px;top:699px;width:120px;height:34px;background:#f0f0f0"></div><div class="b" style="left:522px;top:699px;width:23px;height:34px;background:#ffff80"></div><span class="t" style='left:43.98px;top:706.94px;font:15px/19px "Liberation Serif",serif;'>D</span><span class="t" style='left:99.49px;top:706.94px;font:15px/19px "Liberation Serif",serif;letter-spacing:0.340px;'>384.0858</span><span class="t" style='left:189.20px;top:706.94px;font:15px/19px "Liberation Serif",serif;letter-spacing:-0.116px;'>Ag electron damping</span>
<div class="b" style="left:38px;top:734px;width:23px;height:34px;background:#ff0000"></div><div class="b" style="left:63px;top:734px;width:23px;height:34px;background:#80ff00"></div><div class="b" style="left:87px;top:734px;width:434px;height:34px;background:#dcdcdc"></div><div class="b" style="left:87px;top:734px;width:407px;height:34px;background:#c0c0c0"></div><div class="b" style="left:522px;top:734px;width:23px;height:34px;background:#80ff00"></div><span class="t" style='left:43.98px;top:741.94px;font:15px/19px "Liberation Serif",serif;'>D</span><span class="t" style='left:111.75px;top:741.94px;font:15px/19px "Liberation Serif",serif;letter-spacing:0.209px;'>0.9379</span><span class="t" style='left:189.20px;top:741.94px;font:15px/19px "Liberation Serif",serif;letter-spacing:0.046px;'>NiCr oxidation (0...1)</span>
<span class="t" style='left:49.40px;top:792.44px;font:15px/19px "Liberation Serif",serif;letter-spacing:0.037px;'>C:\live\CODE\database</span>
<div class="b" style="left:581px;top:522px;width:773px;height:272px;background:#d3d3d3"></div><div class="b" style="left:593px;top:560px;width:749px;height:16px;background:#e8e8e8"></div><div class="b" style="left:593px;top:592px;width:749px;height:16px;background:#e8e8e8"></div><div class="b" style="left:593px;top:624px;width:749px;height:16px;background:#e8e8e8"></div><div class="b" style="left:593px;top:656px;width:749px;height:16px;background:#e8e8e8"></div><div class="b" style="left:593px;top:688px;width:749px;height:16px;background:#e8e8e8"></div><div class="b" style="left:593px;top:720px;width:749px;height:16px;background:#e8e8e8"></div><div class="b" style="left:593px;top:752px;width:749px;height:16px;background:#e8e8e8"></div>
<span class="t" style='left:596.00px;top:528.55px;font:bold 12px/15px "Liberation Serif",serif;letter-spacing:0.108px;'>Coating properties</span><span class="t" style='left:596.00px;top:544.85px;font:bold 12px/15px "Liberation Serif",serif;'>Integral quantity</span><span class="t" style='left:967.30px;top:544.85px;font:bold 12px/15px "Liberation Serif",serif;letter-spacing:0.151px;'>Current value</span><span class="t" style='left:1161.30px;top:544.85px;font:bold 12px/15px "Liberation Serif",serif;letter-spacing:0.183px;'>Target value</span><span class="t" style='left:596.00px;top:560.95px;font:12px/15px "Liberation Serif",serif;letter-spacing:-0.031px;'>Light transmittance (D65) (T, Simulation)  [%]</span><span class="t" style='left:985.00px;top:560.95px;font:12px/15px "Liberation Serif",serif;'>85.0</span>
<span class="t" style='left:596.00px;top:576.95px;font:12px/15px "Liberation Serif",serif;letter-spacing:-0.024px;'>L* / D65 / 2° (T, Simulation)</span><span class="t" style='left:976.00px;top:576.95px;font:12px/15px "Liberation Serif",serif;'>93.8882</span>
<span class="t" style='left:596.00px;top:592.95px;font:12px/15px "Liberation Serif",serif;letter-spacing:-0.020px;'>a* / D65 / 2° (T, Simulation)</span><span class="t" style='left:977.00px;top:592.95px;font:12px/15px "Liberation Serif",serif;'>-2.4832</span>
<span class="t" style='left:596.00px;top:608.95px;font:12px/15px "Liberation Serif",serif;letter-spacing:-0.008px;'>b* / D65 / 2° (T, Simulation)</span><span class="t" style='left:979.00px;top:608.95px;font:12px/15px "Liberation Serif",serif;'>2.5931</span>
<span class="t" style='left:596.00px;top:624.95px;font:12px/15px "Liberation Serif",serif;letter-spacing:-0.073px;'>Light reflectance (D65) (RF, Simulation)  [%]</span><span class="t" style='left:988.00px;top:624.95px;font:12px/15px "Liberation Serif",serif;'>4.8</span>
<span class="t" style='left:596.00px;top:640.95px;font:12px/15px "Liberation Serif",serif;letter-spacing:-0.039px;'>L* / D65 / 2° (RF, Simulation)</span><span class="t" style='left:976.00px;top:640.95px;font:12px/15px "Liberation Serif",serif;'>26.0261</span>
<span class="t" style='left:596.00px;top:656.95px;font:12px/15px "Liberation Serif",serif;letter-spacing:-0.035px;'>a* / D65 / 2° (RF, Simulation)</span><span class="t" style='left:979.00px;top:656.95px;font:12px/15px "Liberation Serif",serif;'>0.1382</span>
<span class="t" style='left:596.00px;top:672.95px;font:12px/15px "Liberation Serif",serif;letter-spacing:-0.028px;'>b* / D65 / 2° (RF, Simulation)</span><span class="t" style='left:977.00px;top:672.95px;font:12px/15px "Liberation Serif",serif;'>-9.5328</span>
<span class="t" style='left:596.00px;top:688.95px;font:12px/15px "Liberation Serif",serif;letter-spacing:-0.043px;'>Solar transmittance (EN 410) (T, Simulation)  [%]</span><span class="t" style='left:985.00px;top:688.95px;font:12px/15px "Liberation Serif",serif;'>58.2</span>
<span class="t" style='left:596.00px;top:704.95px;font:12px/15px "Liberation Serif",serif;letter-spacing:-0.082px;'>Solar reflectance (EN 410) (RF, Simulation)  [%]</span><span class="t" style='left:985.00px;top:704.95px;font:12px/15px "Liberation Serif",serif;'>26.2</span>
<span class="t" style='left:596.00px;top:720.95px;font:12px/15px "Liberation Serif",serif;letter-spacing:0.017px;'>Abs. 1st pane (EN 410) (RF, Simulation)  [%]</span><span class="t" style='left:985.00px;top:720.95px;font:12px/15px "Liberation Serif",serif;'>15.7</span>
<span class="t" style='left:596.00px;top:736.95px;font:12px/15px "Liberation Serif",serif;letter-spacing:-0.054px;'>Sheet resistance (RF, Simulation)</span><span class="t" style='left:979.22px;top:736.95px;font:12px/15px "Liberation Serif",serif;'>3.5117</span>
<span class="t" style='left:596.00px;top:752.95px;font:12px/15px "Liberation Serif",serif;letter-spacing:-0.017px;'>Emissivity (effective) (RF, Simulation)</span><span class="t" style='left:979.00px;top:752.95px;font:12px/15px "Liberation Serif",serif;'>0.0457</span>
<span class="t" style='left:596.00px;top:768.95px;font:12px/15px "Liberation Serif",serif;letter-spacing:-0.098px;'>Color angle variation (RF, Simulation)</span><span class="t" style='left:976.00px;top:768.95px;font:12px/15px "Liberation Serif",serif;'>34.1810</span>
</body></html>
